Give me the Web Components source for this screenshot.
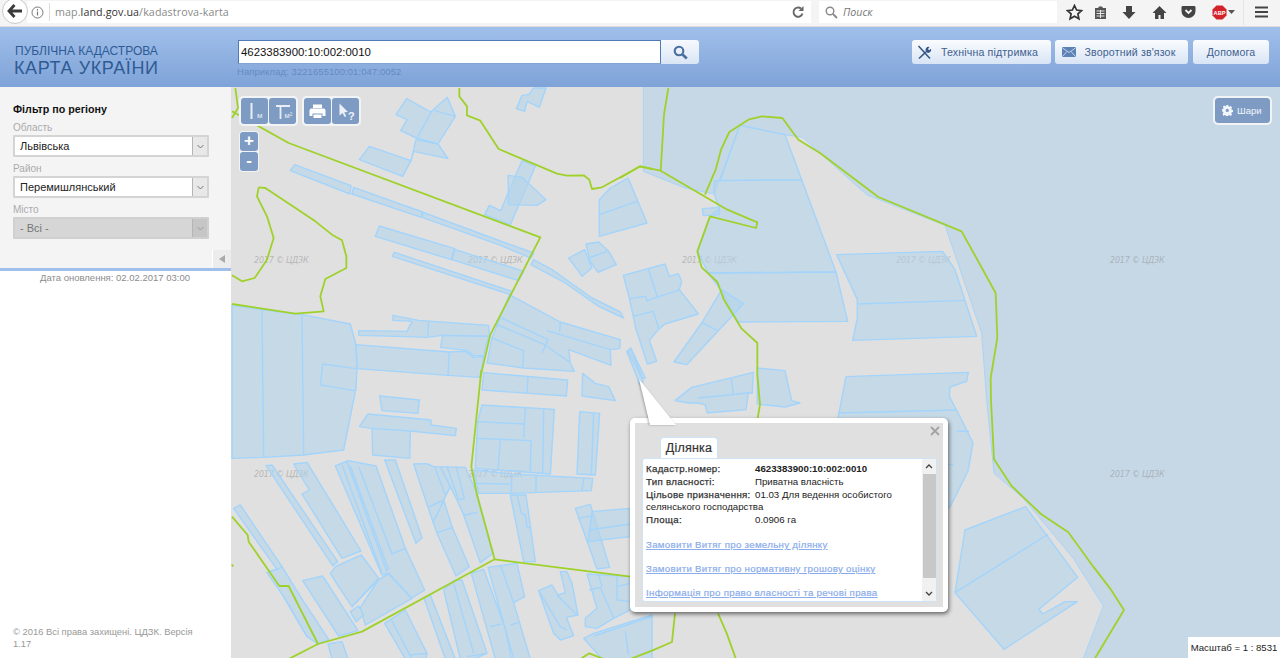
<!DOCTYPE html>
<html lang="uk">
<head>
<meta charset="UTF-8">
<title>Публічна кадастрова карта України</title>
<style>
  html, body { margin: 0; height: 100%; background: #fff; overflow: hidden; font-family: "Liberation Sans", Arial, sans-serif; }
  .main { display: flex; height: 571px; }
</style>
</head>
<body>
<browser-bar></browser-bar>
<site-header></site-header>
<div class="main">
  <filter-panel>
    <region-select label="Область" value="Львівська"></region-select>
    <region-select label="Район" value="Перемишлянський"></region-select>
    <region-select label="Місто" value="- Всі -" disabled></region-select>
  </filter-panel>
  <cadastre-map>
    <map-popup>
      <popup-row label="Кадастр.номер:"><b>4623383900:10:002:0010</b></popup-row>
      <popup-row label="Тип власності:">Приватна власність</popup-row>
      <popup-row label="Цільове призначення:">01.03 Для ведення особистого селянського господарства</popup-row>
      <popup-row label="Площа:">0.0906 га</popup-row>
      <popup-link>Замовити Витяг про земельну ділянку</popup-link>
      <popup-link>Замовити Витяг про нормативну грошову оцінку</popup-link>
      <popup-link>Інформація про право власності та речові права</popup-link>
    </map-popup>
  </cadastre-map>
</div>

<script>
  // Верхняя панель браузера
  class BrowserBar extends HTMLElement {
    constructor() {
      super();
      this.attachShadow({ mode: 'open' }).innerHTML = `
        <style>
          :host { display: flex; align-items: flex-start; height: 27px; box-sizing: border-box; background: #f4f4f4; border-bottom: 1px solid #ddd; font: 10.700px "Open Sans", sans-serif; color: #8a8a8a; }
          .back { width: 26px; height: 26px; margin: -2px 0 0 2px; box-sizing: border-box; border: 1px solid #c9c9c9; border-radius: 50%; background: #fff; display: flex; align-items: center; justify-content: center; flex: none; position: relative; z-index: 1; }
          .url { flex: none; width: 784px; height: 22px; margin: 1px 0 0 -1px; background: #fff; display: flex; align-items: center; box-sizing: border-box; }
          .info { margin-left: 4px; flex: none; }
          .sep { width: 1px; height: 18px; background: #ddd; margin: 0 5px 0 5px; flex: none; }
          .addr { flex: 1; letter-spacing: .1px; }
          .addr b { font-weight: 400; color: #333; }
          .reload { margin-right: 6px; flex: none; }
          .find { width: 238px; height: 22px; margin: 1px 0 0 8px; background: #fff; display: flex; align-items: center; gap: 5px; padding-left: 6px; box-sizing: border-box; font-style: italic; color: #777; flex: none; }
          .tools { flex: 1; display: flex; align-items: center; position: relative; height: 27px; margin-top: -1px; }
          .tools svg { position: absolute; top: 5px; }
          .msep { position: absolute; left: 186px; top: 0; width: 1px; height: 26px; background: #e4e4e4; }
        </style>
        <div class="back"><svg width="16" height="14" viewBox="0 0 16 14"><path d="M7.500 1 2 7l5.500 6M2.500 7H15" fill="none" stroke="#3a3a3a" stroke-width="2.800"/></svg></div>
        <div class="url">
          <svg class="info" width="13" height="13" viewBox="0 0 13 13"><circle cx="6.500" cy="6.500" r="5.500" fill="none" stroke="#777"/><path d="M6.500 5.500v4M6.500 3v1.400" stroke="#777" stroke-width="1.200"/></svg>
          <div class="sep"></div>
          <div class="addr">map.<b>land.gov.ua</b>/kadastrova-karta</div>
          <svg class="reload" width="14" height="14" viewBox="0 0 14 14"><path d="M11.500 8.500A4.600 4.600 0 1 1 10 3.600" fill="none" stroke="#666" stroke-width="1.900"/><path d="M12.500 1v5h-5z" fill="#666"/></svg>
        </div>
        <div class="find">
          <svg width="13" height="13" viewBox="0 0 13 13"><circle cx="5" cy="5" r="3.800" fill="none" stroke="#888" stroke-width="1.400"/><path d="m8 8 4 4" stroke="#888" stroke-width="1.800"/></svg>
          Поиск
        </div>
        <div class="tools">
          <svg style="left:9px" width="17" height="17" viewBox="0 0 17 17"><path d="M8.500 1.500 10.600 6l4.900.6-3.600 3.300 1 4.900-4.400-2.500-4.400 2.500 1-4.900L1.500 6.600 6.400 6z" fill="none" stroke="#333" stroke-width="1.700"/></svg>
          <svg style="left:36px;top:6px" width="15" height="15" viewBox="0 0 15 15"><path d="M2 3h3l1-1.500h3L10 3h3v11H2z" fill="#555"/><path d="M3.500 6h8M3.500 8.500h8M3.500 11h8M7.500 5v8" stroke="#f4f4f4" stroke-width=".9"/></svg>
          <svg style="left:65px;top:6px" width="14" height="15" viewBox="0 0 14 15"><path d="M4 1h6v6h3.500L7 14 .5 7H4z" fill="#444"/></svg>
          <svg style="left:95px;top:6px" width="15" height="15" viewBox="0 0 15 15"><path d="M7.500 1 .5 8h2.500v6h3.500v-4h2v4H12V8h2.500z" fill="#444"/></svg>
          <svg style="left:124px;top:6px" width="15" height="14" viewBox="0 0 15 14"><path d="M1.500 1h12A1.200 1.200 0 0 1 14.500 2.200V6A7 7 0 0 1 .5 6V2.200A1.200 1.200 0 0 1 1.500 1z" fill="#444"/><path d="m4.500 5 3 3 3-3" fill="none" stroke="#f4f4f4" stroke-width="1.800"/></svg>
          <svg style="left:155px;top:6px" width="15" height="15" viewBox="0 0 15 15"><path d="M4.500.5h6l4 4v6l-4 4h-6l-4-4v-6z" fill="#d3222a"/><text x="7.500" y="9.800" font-size="5.600" font-weight="700" fill="#fff" text-anchor="middle" font-family="Liberation Sans">ABP</text></svg>
          <svg style="left:171px;top:11px" width="7" height="4" viewBox="0 0 7 4"><path d="M0 0h7L3.500 4z" fill="#555"/></svg>
          <div class="msep"></div>
          <svg style="left:198px;top:7px" width="13" height="12" viewBox="0 0 13 12"><path d="M0 1.500h13M0 6h13M0 10.500h13" stroke="#444" stroke-width="2.200"/></svg>
        </div>`;
    }
  }

  // Шапка сайта: логотип, поиск, кнопки
  class SiteHeader extends HTMLElement {
    constructor() {
      super();
      this.attachShadow({ mode: 'open' }).innerHTML = `
        <style>
          :host { display: flex; height: 60px; box-sizing: border-box; padding: 13px 11px 0 14px; background: linear-gradient(#a0bfea, #7fa3d8); font-family: "Liberation Sans", sans-serif; }
          .logo { width: 224px; flex: none; color: #2f5b94; line-height: 1; }
          .logo .a { font-size: 12px; margin: 5px 0 0 1px; }
          .logo .b { font-size: 18px; margin-top: 2px; letter-spacing: .6px; }
          .search { flex: none; width: 462px; }
          .row { display: flex; height: 24px; }
          .row input { width: 423px; box-sizing: border-box; border: 1px solid #4f7ab5; border-bottom-color: #83a6d6; padding: 0 2px; font: 11.400px "Liberation Sans", sans-serif; color: #111; background: #fff; outline: none; }
          .go { width: 38px; border-radius: 0 3px 3px 0; background: linear-gradient(#f6f9fd, #d9e5f5); display: flex; align-items: center; justify-content: center; }
          .hint { font-size: 9.450px; color: #648ac0; margin-top: 2px; letter-spacing: .1px; margin-left: -1px; }
          .btns { margin-left: auto; display: flex; gap: 4px; align-items: flex-start; }
        </style>
        <div class="logo"><div class="a">ПУБЛІЧНА КАДАСТРОВА</div><div class="b">КАРТА УКРАЇНИ</div></div>
        <div class="search">
          <div class="row">
            <input value="4623383900:10:002:0010">
            <div class="go"><svg width="15" height="15" viewBox="0 0 15 15"><circle cx="6" cy="6" r="4.300" fill="none" stroke="#4a6f9f" stroke-width="2.100"/><path d="m9.500 9.500 4.300 4" stroke="#4a6f9f" stroke-width="2.600"/></svg></div>
          </div>
          <div class="hint">Наприклад: 3221655100:01:047:0052</div>
        </div>
        <div class="btns">
          <header-button style="width:139px;padding-right:8px"><svg slot="icon" width="15" height="15" viewBox="0 0 15 15"><path d="M1.500 1 13 13.500M2 13.500 9 6.800" stroke="#37598a" stroke-width="1.600" fill="none"/><path d="M9 6.500a3 3 0 0 1 3.500-4.500L11 4l1 1.200 2-1.500A3 3 0 0 1 9.800 7.500z" fill="#37598a"/></svg>Технічна підтримка</header-button>
          <header-button style="width:133px;padding-right:6px"><svg slot="icon" width="14" height="10" viewBox="0 0 14 10"><rect width="14" height="10" rx="1" fill="#5d83b6"/><path d="m.5 1 6.500 4.500L13.500 1M.5 9.500l4.500-5M13.500 9.500 9 4.500" stroke="#dce7f5" stroke-width=".8" fill="none"/></svg>Зворотний зв'язок</header-button>
          <header-button style="width:76px;margin-left:1px">Допомога</header-button>
        </div>`;
    }
  }

  class HeaderButton extends HTMLElement {
    constructor() {
      super();
      this.attachShadow({ mode: 'open' }).innerHTML = `
        <style>
          :host { display: flex; height: 24px; align-items: center; justify-content: center; gap: 9px; box-sizing: border-box; border-radius: 3px; background: linear-gradient(#fafcfe, #d8e4f5); color: #41618f; font: 10.600px "Liberation Sans", sans-serif; letter-spacing: .15px; }
        </style>
        <slot name="icon"></slot><slot></slot>`;
    }
  }

  // Левая панель с фильтром
  class FilterPanel extends HTMLElement {
    constructor() {
      super();
      this.attachShadow({ mode: 'open' }).innerHTML = `
        <style>
          :host { display: flex; flex-direction: column; width: 231px; flex: none; height: 571px; font-family: "Liberation Sans", sans-serif; }
          .box { position: relative; height: 181px; box-sizing: border-box; padding: 15px 22px 0 13px; background: #f4f4f4; }
          h3 { margin: 0 0 5px; font-size: 10.700px; line-height: 14px; color: #111; }
          .bar { height: 3px; background: #9fc0ea; }
          .fold { position: absolute; right: 0; bottom: 0; width: 18px; height: 18px; background: #ececec; border-left: 1px solid #fff; display: flex; align-items: center; justify-content: center; }
          .fold i { border: 4px solid transparent; border-right: 6px solid #a9a9a9; border-left: 0; }
          .date { text-align: center; font-size: 9.500px; line-height: 12px; margin: 1px 0 0 -1px; color: #8c8c8c; }
          .copy { margin-top: auto; padding: 0 25px 9px 13px; font-size: 9.400px; line-height: 11.500px; color: #999; }
        </style>
        <div class="box">
          <h3>Фільтр по регіону</h3>
          <slot></slot>
          <div class="fold"><i></i></div>
        </div>
        <div class="bar"></div>
        <div class="date">Дата оновлення: 02.02.2017 03:00</div>
        <div class="copy">© 2016 Всі права захищені. ЦДЗК. Версія 1.17</div>`;
    }
  }

  class RegionSelect extends HTMLElement {
    constructor() {
      super();
      const off = this.hasAttribute('disabled');
      this.attachShadow({ mode: 'open' }).innerHTML = `
        <style>
          :host { display: block; height: 41px; font-family: "Liberation Sans", sans-serif; }
          .lab { font-size: 10px; line-height: 14px; color: #ababab; }
          .sel { display: flex; height: 22px; box-sizing: border-box; border: 2px solid ${off ? '#d0d0d0' : '#d4d4d4'}; background: ${off ? '#d6d6d6' : '#fff'}; border-radius: 1px; }
          .val { flex: 1; padding-left: 5px; font-size: 11px; line-height: 18px; color: ${off ? '#777' : '#222'}; }
          .arr { width: 14px; background: ${off ? '#c6c6c6' : '#e8e8e8'}; border-left: 1px solid #b5b5b5; display: flex; align-items: center; justify-content: center; }
        </style>
        <div class="lab">${this.getAttribute('label')}</div>
        <div class="sel">
          <div class="val">${this.getAttribute('value')}</div>
          <div class="arr"><svg width="7" height="5" viewBox="0 0 7 5"><path d="m.5 1 3 3 3-3" fill="none" stroke="${off ? '#999' : '#777'}"/></svg></div>
        </div>`;
    }
  }

  // Контуры на карте, координаты снимались с увеличенных кусков
  const WATER = '70,-5 70,250 195,300 282,318 360,112 495,140 548,148 600,195 740,320 975,412 1085,735 1100,936 1122,1156 1210,1231 1360,1411 1450,1554 1390,1711 1390,1730 1990,1730 1990,-5';
  const PARCELS_TOP = [ // начало 232,88
    '492,80 524,32 596,72 646,28 670,85 618,168 553,150 506,128 525,95',
    '552,155 618,168 648,212 545,190 537,218',
    '382,215 412,175 537,218 512,265',
    '853,62 870,22 890,20 905,0 942,0 922,58 885,40 878,70',
    '175,248 188,230 357,293 354,318',
    '360,318 365,298 572,372 568,388',
    '570,388 574,373 740,435 905,495 897,510 800,470',
    '430,445 442,414 668,482 658,515',
    '660,515 668,484 875,550 860,578',
    '481,505 487,493 840,610 835,620',
    '897,530 905,515 960,545 1080,630 1165,672 1175,690 1100,655 1000,585',
    '758,380 772,352 806,368 870,218 910,235 835,410',
    '828,262 870,268 942,335 915,352 830,350',
    '1010,510 1058,485 1080,540 1050,565 1040,550',
    '1062,468 1100,462 1130,490 1153,530 1098,553 1075,520',
    '0,652 90,665 210,680 355,708 372,770 375,843 372,900 335,1086 215,1101 95,1108 0,1111',
    '380,728 525,730 540,700 483,697 483,682 560,697 770,712 772,745 630,742 585,748 525,746 380,742',
    '626,778 632,742 770,745 755,803 725,803 705,788',
    '372,770 652,792 700,790 725,808 755,805 745,868 648,862 375,842',
    '832,620 985,702 1165,755 1163,782 1135,785 1137,832 1010,785 1015,825 1027,850 875,840 765,825 780,750',
    '1187,790 1197,782 1240,870 1230,870'
  ];
  const LINES_TOP = [
    '608,68 670,85', '598,72 555,150', '808,690 948,755 930,795', '985,702 983,730',
    '790,708 935,768 1012,822', '780,750 875,788 872,838', '945,728 1135,785',
    '590,700 587,745', '652,792 648,862', '272,828 372,842', '272,828 265,891 368,908', '1075,508 1125,490',
    '90,665 95,1108', '210,680 215,1101'
  ];
  const PARCELS_LOW = [ // начало 232,370
    '755,8 1007,30 1003,78 750,60',
    '1052,10 1090,40 1130,50 1150,92 1050,78',
    '750,105 967,118 955,312 730,295 737,155',
    '1043,125 1103,130 1090,315 1035,312',
    '443,78 562,90 558,130 450,122',
    '382,170 408,132 597,150 597,165 673,175 670,197 535,183 533,265 422,255 420,175',
    '725,300 840,312 1082,325 1078,362 840,370 740,370',
    '835,375 882,375 910,575 875,575',
    '1030,415 1075,403 1133,592 1095,597',
    '1080,425 1195,415 1195,500 1068,515',
    '102,287 120,285 317,575 302,587',
    '185,282 225,277 387,543 330,565 210,372 232,360',
    '310,288 348,272 432,288 520,535 578,660 538,685 470,610 450,615',
    '458,270 490,270 570,503 552,520',
    '545,282 585,281 605,290 700,292 735,370 782,550 745,578 695,435 675,390 655,350 635,390 660,470 712,590 672,618 615,490 588,412',
    '5,415 25,405 150,590 215,695 290,808 258,822 225,800 155,680 105,608 135,598',
    '212,632 272,618 378,782 320,798',
    '295,610 310,590 388,555 440,625 360,710 320,650',
    '355,725 380,708 395,735 372,755',
    '385,712 440,628 470,612 540,685 400,765',
    '458,760 520,720 585,850 582,867 520,867',
    '575,682 595,675 670,867 640,867',
    '635,660 665,632 690,630 765,850 725,867 685,867',
    '718,610 755,598 820,775 838,867 790,867',
    '768,592 855,580 878,680 845,698 895,867 845,867',
    '920,662 960,645 978,675 1000,668 985,605 1005,605 1020,640 1038,735 1003,742 1025,797 985,810 965,790 945,735',
    '1065,612 1195,620 1195,720 1145,745 1095,775 1060,770 1060,745 1095,715',
    '1055,805 1085,790 1260,735 1260,867 1110,867',
    '288,822 330,815 348,867 300,867'
  ];
  const LINES_LOW = [
    '888,20 885,68', '880,112 875,205', '737,155 878,162', '935,118 932,310', '735,205 897,212 895,305', '805,210 798,300',
    '1085,128 1078,315', '420,175 535,183', '728,340 838,342', '912,315 912,365', '1055,325 1050,362', '840,312 838,368',
    '855,375 868,430 880,435 885,470 895,475', '1037,445 1085,437', '1070,480 1195,462',
    '330,285 450,610', '345,275 465,605', '355,288 470,600', '380,290 480,552', '478,552 520,535', '440,628 360,710',
    '588,412 635,390', '608,290 640,375', '625,290 655,350', '645,290 680,390 697,385 672,290', '695,435 735,428', '603,458 635,392', '615,488 660,473',
    '110,605 150,592', '155,680 225,800', '478,750 540,867', '665,640 725,850', '775,770 808,762', '835,765 860,758', '805,585 845,698',
    '920,662 985,770 1005,780', '975,675 1035,735', '1072,660 1105,652 1145,745', '1100,615 1110,650', '1155,620 1155,690 1195,695', '1155,650 1195,640',
    '1085,798 1260,740', '1180,785 1190,855', '535,855 585,850', '705,860 765,850'
  ];
  const PARCELS_RIGHT = [ // начало 620,88
    '283,278 545,275 648,552 265,555 232,490 270,385 298,362 283,318',
    '300,278 360,112 495,140 545,275',
    '265,555 648,552 683,700 355,702 305,610',
    '247,362 298,358 298,380 250,383',
    '10,562 135,528 148,565 175,557 185,580 178,605 235,678 135,708 115,725 88,757 110,820 82,828 47,720 28,630',
    '162,822 245,705 305,605 370,647 200,830',
    '20,790 33,780 70,880 60,890',
    '165,938 215,898 400,853 397,915 385,915 378,965 262,975 255,950 235,945 205,945',
    '412,840 495,848 515,938 540,945 495,957 412,948',
    '650,500 968,490 1005,545 1070,745 698,757 712,690 712,635',
    '655,985 678,866 1045,853 1040,880 990,897 988,925 1022,990 1059,1065 1044,1149 990,1257 900,1320 640,1320',
    '-62,335 -29,300 24,270 81,405 -62,445'
  ];
  const LINES_RIGHT = [
    '85,542 113,630', '28,632 78,625 80,638 180,605', '40,685 100,670 117,725', '245,703 292,728',
    '333,870 340,917', '235,930 385,915', '712,648 1033,637', '655,975 1010,966', '1000,1130 700,1130', '1010,1030 1047,1030',
    '-62,380 51,340'
  ];
  const PARCELS_FAR = [ // начало 940,400
    '75,390 257,320 413,532 297,628 308,642 375,605 412,605 192,748 45,578'
  ];
  const LINES_FAR = ['45,578 325,402'];

  const GREEN_TOP = [
    '10,0 18,60 0,90', '0,70 170,165 925,448 775,740 745,868',
    '682,0 682,25 705,55 705,82 745,98 800,183 975,257 1005,263 1055,262 1072,275 1080,303 1110,298 1225,235 1260,243',
    '80,298 100,300 250,400 300,440 330,457 343,505 343,540 280,573 265,625 275,670 190,677 0,648',
    '0,562 30,580 68,570 105,515 125,450 105,385 75,325 80,298'
  ];
  const GREEN_LOW = [
    '748,0 718,290 735,375 788,568 1195,620', '788,568 390,785 258,822 170,867',
    '258,822 170,648 142,648 50,515 47,495 0,440', '1045,867 1072,850 1115,867', '1195,867 1260,842 1320,816 1329,730',
    '1458,730 1483,787 1513,870', '0,583 3,590'
  ];
  const GREEN_RIGHT = [
    '0,270 60,235 122,248 125,200 132,80 145,0',
    '122,248 322,365 412,403 408,420 270,385 232,490 245,538 292,582 312,635 365,722 412,765 412,860 420,950 413,990',
    '255,320 287,245 303,185 328,132 385,95 425,85 487,90 535,155 600,195 775,327 1025,430 1127,615 1132,750 1112,870 1113,936 1122,1114 1175,1194 1263,1278 1345,1333 1420,1436 1470,1501 1512,1566 1425,1711'
  ];

  const polys = list => list.map(p => `<polygon points="${p}"/>`).join('');
  const lines = list => list.map(p => `<polyline points="${p}"/>`).join('');

  // Карта с участками и инструментами
  class CadastreMap extends HTMLElement {
    constructor() {
      super();
      let marks = '';
      for (const x of [254, 468, 682, 896, 1110]) {
        marks += `<text x="${x}" y="263">2017 © ЦДЗК</text>`;
      }
      // вторая строка, кроме тех что под окном участка
      for (const x of [254, 468, 1110]) {
        marks += `<text x="${x}" y="477">2017 © ЦДЗК</text>`;
      }
      this.attachShadow({ mode: 'open' }).innerHTML = `
        <style>
          :host { display: block; position: relative; flex: 1; background: #e0e0e0; overflow: hidden; font-family: "Liberation Sans", sans-serif; }
          svg.base { display: block; width: 1049px; height: 571px; }
          .p polygon { fill: #b4d3ea; fill-opacity: .6; stroke: #a3d4fb; stroke-width: 1.400; vector-effect: non-scaling-stroke; stroke-linejoin: round; }
          .p polyline { fill: none; stroke: #a3d4fb; stroke-width: 1.400; vector-effect: non-scaling-stroke; }
          .g polyline { fill: none; stroke: #9fd12b; stroke-width: 1.800; vector-effect: non-scaling-stroke; stroke-linejoin: round; }
          .w polygon { fill: #c6d8e6; stroke: #a6d5fa; stroke-width: 1; vector-effect: non-scaling-stroke; }
          .marks text { font: italic 8px "DejaVu Sans", sans-serif; fill: #8c8c8c; fill-opacity: .5; letter-spacing: -.2px; }
          .tools { position: absolute; left: 8px; top: 9px; display: flex; gap: 4px; }
          .group { display: flex; gap: 1px; padding: 1px; background: #f1f3f5; border-radius: 4px; border: 1px solid #f1f3f5; }
          .zoom { position: absolute; left: 8px; top: 44px; padding: 1px; background: #f1f3f5; border-radius: 4px; display: flex; flex-direction: column; gap: 1px; width: 18px; }
          .zoom div { height: 19px; background: #7e9cc3; color: #fff; border-radius: 3px; text-align: center; font: 700 17px/18px "Liberation Sans", sans-serif; }
          .tool { width: 27px; height: 26px; background: #7e9cc3; border-radius: 3px; display: block; }
          .layers { position: absolute; right: 10px; top: 11px; display: flex; align-items: center; gap: 4px; width: 55px; height: 25px; box-sizing: border-box; padding-left: 7px; background: #7e9cc3; outline: 2px solid #f1f3f5; border-radius: 3px; color: #f2f5fa; font-size: 9.500px; }
          .scale { position: absolute; right: 0; bottom: 0; width: 92px; height: 21px; background: #fff; font-size: 9.600px; line-height: 21px; color: #222; text-align: center; white-space: nowrap; }
        </style>
        <svg class="base" viewBox="231 87 1049 571">
          <g class="w" transform="translate(620 88) scale(.33333)"><polygon points="${WATER}"/></g>
          <g class="marks">${marks}</g>
          <g class="p" transform="translate(232 88) scale(.33333)">${polys(PARCELS_TOP)}${lines(LINES_TOP)}</g>
          <g class="p" transform="translate(232 370) scale(.33333)">${polys(PARCELS_LOW)}${lines(LINES_LOW)}</g>
          <g class="p" transform="translate(620 88) scale(.33333)">${polys(PARCELS_RIGHT)}${lines(LINES_RIGHT)}</g>
          <g class="p" transform="translate(940 400) scale(.33333)">${polys(PARCELS_FAR)}${lines(LINES_FAR)}</g>
          <g class="g" transform="translate(232 88) scale(.33333)">${lines(GREEN_TOP)}</g>
          <g class="g" transform="translate(232 370) scale(.33333)">${lines(GREEN_LOW)}</g>
          <g class="g" transform="translate(620 88) scale(.33333)">${lines(GREEN_RIGHT)}</g>
        </svg>
        <div class="tools">
          <div class="group">
            <svg class="tool" viewBox="0 0 27 26"><path d="M10.500 5v16" stroke="#e8eef6" stroke-width="2"/><text x="16" y="20" font-size="8" fill="#e8eef6" font-family="Liberation Sans">м</text></svg>
            <svg class="tool" viewBox="0 0 27 26"><path d="M7 8h14M11.500 8v13" stroke="#e8eef6" stroke-width="1.800" fill="none"/><text x="15.500" y="20" font-size="7.500" fill="#e8eef6" font-family="Liberation Sans">м²</text></svg>
          </div>
          <div class="group">
            <svg class="tool" viewBox="0 0 27 26"><path d="M9 6.500h9V10H9z" fill="#fff"/><path d="M7.500 10.500h12a2 2 0 0 1 2 2V18h-3v-2.500h-10V18h-3v-5.500a2 2 0 0 1 2-2z" fill="#fff"/><path d="M9.500 16.500h8v3.500h-8z" fill="#fff"/></svg>
            <svg class="tool" viewBox="0 0 27 26"><path d="M7.500 5.500v12l3-2.500 2.200 4 1.500-.8-2-3.900 3.800-.3z" fill="#eef2f8"/><text x="16" y="22" font-size="11" font-weight="700" fill="#eef2f8" font-family="Liberation Sans">?</text></svg>
          </div>
        </div>
        <div class="zoom"><div>+</div><div>-</div></div>
        <div class="layers">
          <svg width="11" height="11" viewBox="0 0 11 11"><path d="M4.500 0h2l.3 1.500 1.200.5 1.300-.8 1.200 1.400-.8 1.200.5 1.200 1.300.3v2l-1.300.3-.5 1.200.8 1.200-1.400 1.200-1.200-.8-1.200.5-.3 1.300h-2l-.3-1.300-1.200-.5-1.200.8L.8 9.300l.8-1.200-.5-1.200L0 6.500v-2l1.300-.3.5-1.200L1 1.800 2.400.6l1.200.8 1-.4z" fill="#f2f5fa" transform="translate(-.2 -.1) scale(.98)"/><circle cx="5.300" cy="5.400" r="1.600" fill="#7e9cc3"/></svg>
          Шари
        </div>
        <div class="scale">Масштаб = 1 : 8531</div>
        <slot></slot>`;
    }
  }

  // Всплывающее окно участка
  class MapPopup extends HTMLElement {
    constructor() {
      super();
      this.attachShadow({ mode: 'open' }).innerHTML = `
        <style>
          :host { position: absolute; left: 399px; top: 331px; width: 318px; height: 194px; box-sizing: border-box; border: 5px solid #fff; border-radius: 5px; background: #e0e0e0; box-shadow: 1px 2px 4px rgba(0,0,0,.55); font-family: "Liberation Sans", sans-serif; }
          .tail { position: absolute; left: -5px; top: -44px; filter: drop-shadow(-1px 0 1px rgba(0,0,0,.3)); }
          .close { position: absolute; right: 3px; top: 3px; width: 10px; height: 10px; }
          .tab { position: absolute; left: 25px; top: 14px; width: 58px; height: 21px; box-sizing: border-box; background: #fff; border: 1px solid #cde4f8; border-bottom: 0; border-radius: 4px 4px 0 0; text-align: center; font-size: 12.500px; line-height: 21px; color: #333; z-index: 1; letter-spacing: .2px; -webkit-text-stroke: .2px #333; }
          .body { position: absolute; left: 7px; top: 35px; width: 295px; height: 144px; box-sizing: border-box; background: #fff; border: 1px solid #cde4f8; border-radius: 3px; overflow: hidden; padding: 4px 16px 0 3px; }
          .scroll { position: absolute; right: 0; top: 0; bottom: 0; width: 14px; background: #f1f1f1; }
          .thumb { position: absolute; left: 1px; right: 0; top: 15px; height: 104px; background: #c8c8c8; }
          .scroll svg { position: absolute; left: 3px; }
        </style>
        <svg class="tail" width="50" height="48" viewBox="0 0 50 48"><path d="M9 0 20 46h26z" fill="#fff"/></svg>
        <svg class="close" viewBox="0 0 10 10"><path d="m1 1 8 8M9 1 1 9" stroke="#a3a3a3" stroke-width="1.800"/></svg>
        <div class="tab">Ділянка</div>
        <div class="body">
          <slot></slot>
          <div class="scroll">
            <div class="thumb"></div>
            <svg style="top:5px" width="8" height="5" viewBox="0 0 8 5"><path d="m1 4 3-3 3 3" fill="none" stroke="#444" stroke-width="1.300"/></svg>
            <svg style="bottom:5px" width="8" height="5" viewBox="0 0 8 5"><path d="m1 1 3 3 3-3" fill="none" stroke="#444" stroke-width="1.300"/></svg>
          </div>
        </div>`;
    }
  }

  class PopupRow extends HTMLElement {
    constructor() {
      super();
      this.attachShadow({ mode: 'open' }).innerHTML = `
        <style>
          :host { display: block; font-size: 9.700px; line-height: 12.800px; color: #222; }
          .lab { display: inline-block; width: 109px; color: #333; letter-spacing: .3px; -webkit-text-stroke: .25px #333; white-space: nowrap; }
        </style>
        <span class="lab">${this.getAttribute('label')}</span><slot></slot>`;
    }
  }

  class PopupLink extends HTMLElement {
    constructor() {
      super();
      this.attachShadow({ mode: 'open' }).innerHTML = `
        <style>
          :host { display: block; font-size: 9.700px; line-height: 12px; margin-top: 12px; color: #8aaceb; text-decoration: underline; letter-spacing: .3px; -webkit-text-stroke: .2px #8aaceb; white-space: nowrap; }
        </style>
        <slot></slot>`;
    }
  }

  customElements.define('browser-bar', BrowserBar);
  customElements.define('site-header', SiteHeader);
  customElements.define('header-button', HeaderButton);
  customElements.define('filter-panel', FilterPanel);
  customElements.define('region-select', RegionSelect);
  customElements.define('cadastre-map', CadastreMap);
  customElements.define('map-popup', MapPopup);
  customElements.define('popup-row', PopupRow);
  customElements.define('popup-link', PopupLink);
</script>
</body>
</html>
